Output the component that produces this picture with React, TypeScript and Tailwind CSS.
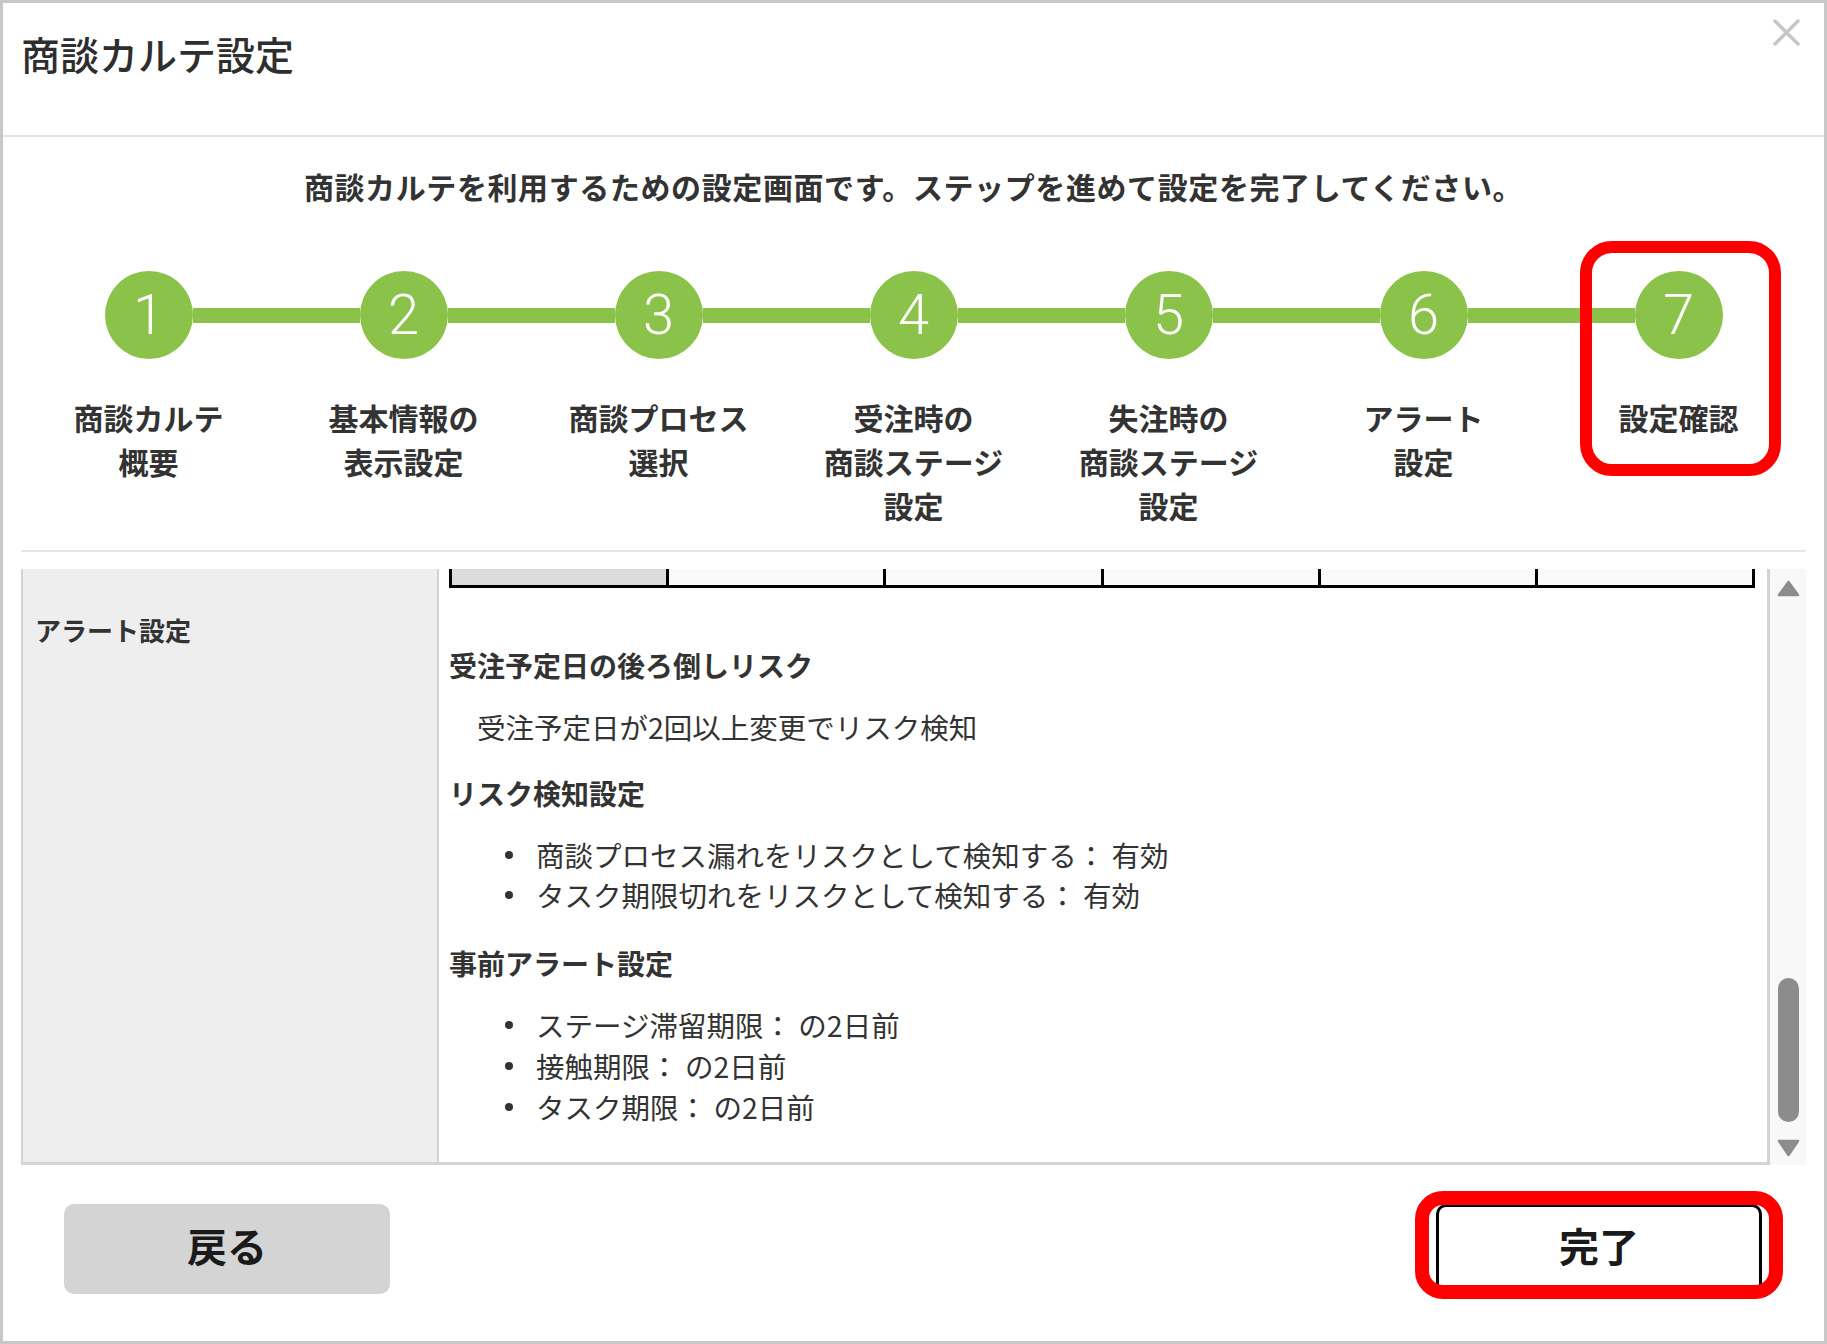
const steps = [
  { n: 1, label: ["商談カルテ", "概要"] },
  { n: 2, label: ["基本情報の", "表示設定"] },
  { n: 3, label: ["商談プロセス", "選択"] },
  { n: 4, label: ["受注時の", "商談ステージ", "設定"] },
  { n: 5, label: ["失注時の", "商談ステージ", "設定"] },
  { n: 6, label: ["アラート", "設定"] },
  { n: 7, label: ["設定確認"] },
];

const riskRules = [
  "商談プロセス漏れをリスクとして検知する： 有効",
  "タスク期限切れをリスクとして検知する： 有効",
];

const preAlerts = [
  "ステージ滞留期限： の2日前",
  "接触期限： の2日前",
  "タスク期限： の2日前",
];

export default function App() {
  return (
    <div className="h-[1344px] w-[1827px] overflow-hidden border-[3px] border-[#c8c8c8] bg-white font-['Noto_Sans_CJK_JP',sans-serif] text-[#333]">
      {/* Header */}
      <header className="flex h-[134px] items-start justify-between border-b-2 border-[#e5e5e5]">
        <h1 className="ml-[18px] mt-[31px] text-[39px] font-medium leading-[39px] text-[#2e2e2e]">
          商談カルテ設定
        </h1>
        <button className="mr-[24px] mt-[16px]" aria-label="close">
          <svg width="27" height="27" viewBox="0 0 27 27">
            <path
              d="M2 2 L25 25 M25 2 L2 25"
              stroke="#c6c6c6"
              strokeWidth="3.5"
              strokeLinecap="round"
            />
          </svg>
        </button>
      </header>

      <div className="px-[18px]">
        <p className="mt-[29px] text-center text-[30px] font-bold leading-[40px] tracking-[0.6px] text-[#333]">
          商談カルテを利用するための設定画面です。ステップを進めて設定を完了してください。
        </p>

        {/* Stepper */}
        <ol className="mt-[65px] grid grid-cols-7">
          {steps.map((s, i) => (
            <li key={s.n} className="relative flex flex-col items-center">
              <div className="flex w-full items-center">
                <span
                  className={`h-[15px] flex-1 ${i === 0 ? "" : "bg-[#8bc34a]"}`}
                />
                <span className="flex h-[88px] w-[88px] shrink-0 items-center justify-center rounded-full bg-[#8bc34a] font-['Roboto',sans-serif] text-[56px] font-light leading-none text-white">
                  {s.n}
                </span>
                <span
                  className={`h-[15px] flex-1 ${
                    i === steps.length - 1 ? "" : "bg-[#8bc34a]"
                  }`}
                />
              </div>
              <div className="mt-[36px] text-center text-[30px] font-bold leading-[44px] text-[#333]">
                {s.label.map((l) => (
                  <div key={l}>{l}</div>
                ))}
              </div>
              {s.n === 7 && (
                <span className="pointer-events-none absolute left-[29px] top-[-30px] h-[235px] w-[201px] rounded-[32px] border-[12px] border-[#ff0000]" />
              )}
            </li>
          ))}
        </ol>

        <div className="mt-[23px] h-[2px] bg-[#e6e6e6]" />

        {/* Summary table */}
        <div className="mt-[17px] flex h-[596px]">
          <div className="flex flex-1 border-b-[3px] border-l-2 border-[#d4d4d4]">
            <div className="w-[416px] shrink-0 border-r-2 border-[#d2d2d2] bg-[#eeeeee] pl-[12px] pt-[43px] text-[26px] font-bold leading-[36px] text-[#333]">
              アラート設定
            </div>
            <div className="flex-1 overflow-hidden pl-[10px]">
              <div className="grid h-[19px] w-[1306px] grid-cols-6 border-b-[3px] border-l-[3px] border-black">
                {[0, 1, 2, 3, 4, 5].map((c) => (
                  <div
                    key={c}
                    className={`border-r-[3px] border-black ${
                      c === 0 ? "bg-[#dcdcdc]" : "bg-[#fafafa]"
                    }`}
                  />
                ))}
              </div>

              <h3 className="mt-[57px] text-[28px] font-bold leading-[40px] text-[#333]">
                受注予定日の後ろ倒しリスク
              </h3>
              <p className="mt-[22px] pl-[28px] text-[28.5px] leading-[40px] text-[#333]">
                受注予定日が2回以上変更でリスク検知
              </p>

              <h3 className="mt-[26px] text-[28px] font-bold leading-[40px] text-[#333]">
                リスク検知設定
              </h3>
              <ul className="mt-[22px]">
                {riskRules.map((r) => (
                  <li
                    key={r}
                    className="flex items-center text-[28.5px] leading-[40px] text-[#333]"
                  >
                    <span className="ml-[56px] mr-[23px] h-[8px] w-[8px] rounded-full bg-[#333]" />
                    {r}
                  </li>
                ))}
              </ul>

              <h3 className="mt-[28px] text-[28px] font-bold leading-[40px] text-[#333]">
                事前アラート設定
              </h3>
              <ul className="mt-[21px]">
                {preAlerts.map((r) => (
                  <li
                    key={r}
                    className="flex items-center text-[28.5px] leading-[41px] text-[#333]"
                  >
                    <span className="ml-[56px] mr-[23px] h-[8px] w-[8px] rounded-full bg-[#333]" />
                    {r}
                  </li>
                ))}
              </ul>
            </div>
          </div>

          {/* Scrollbar */}
          <div className="flex w-[39px] shrink-0 flex-col items-center border-l-[3px] border-[#d2d2d2] bg-[#f8f8f8] pb-[8px] pt-[11px]">
            <svg width="23" height="17" viewBox="0 0 23 17">
              <path
                d="M11.5 2 L21 15 L2 15 Z"
                fill="#8c8c8c"
                stroke="#8c8c8c"
                strokeWidth="2.5"
                strokeLinejoin="round"
              />
            </svg>
            <div className="flex-1" />
            <div className="h-[144px] w-[21px] rounded-full bg-[#8c8c8c]" />
            <svg className="mt-[17px]" width="23" height="18" viewBox="0 0 23 18">
              <path
                d="M2 2 L21 2 L11.5 16 Z"
                fill="#8c8c8c"
                stroke="#8c8c8c"
                strokeWidth="2.5"
                strokeLinejoin="round"
              />
            </svg>
          </div>
        </div>
      </div>

      {/* Footer actions */}
      <footer className="mt-[39px] flex justify-between pl-[61px] pr-[62px]">
        <button className="flex h-[90px] w-[326px] items-center justify-center rounded-[10px] bg-[#d4d4d4] pb-[8px] text-[40px] font-bold leading-none text-[#1a1a1a]">
          戻る
        </button>
        <div className="relative">
          <button className="flex h-[90px] w-[326px] items-center justify-center rounded-[10px] border-[3px] border-black bg-white pb-[8px] text-[40px] font-bold leading-none text-[#1a1a1a]">
            完了
          </button>
          <span className="pointer-events-none absolute left-[-21px] top-[-13px] h-[108px] w-[368px] rounded-[28px] border-[14px] border-[#ff0000]" />
        </div>
      </footer>
    </div>
  );
}
